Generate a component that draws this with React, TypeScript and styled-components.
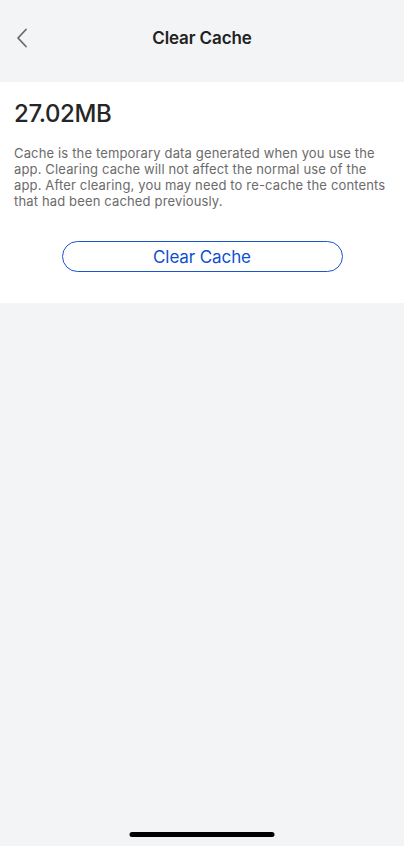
import styled, { createGlobalStyle } from "styled-components";

const GlobalStyle = createGlobalStyle`
  html, body {
    margin: 0;
    padding: 0;
    background: #f3f4f6;
  }
  body {
    font-family: Inter, "Liberation Sans", Arial, sans-serif;
    -webkit-font-smoothing: antialiased;
  }
`;

const Page = styled.div`
  position: relative;
  min-height: 846px;
  background: #f3f4f6;
  display: flex;
  flex-direction: column;
`;

const Header = styled.header`
  padding: 16px 0 22px;
`;

const NavBar = styled.div`
  position: relative;
  height: 44px;
  display: flex;
  align-items: center;
  justify-content: center;
`;

const BackButton = styled.button`
  position: absolute;
  left: 10px;
  top: 50%;
  transform: translateY(-50%);
  width: 24px;
  height: 24px;
  padding: 0;
  border: none;
  background: none;
  display: flex;
  align-items: center;
  justify-content: center;
`;

const Title = styled.h1`
  margin: 0;
  font-size: 17px;
  font-weight: 600;
  color: #222;
  letter-spacing: -0.1px;
`;

const Panel = styled.section`
  background: #fff;
  padding: 16px 14px 31px;
  display: flex;
  flex-direction: column;
`;

const Size = styled.div`
  font-size: 24px;
  line-height: 32px;
  font-weight: 500;
  color: #262626;
  letter-spacing: -0.4px;
`;

const Description = styled.p`
  margin: 15px 0 0;
  font-size: 13px;
  line-height: 16px;
  color: #6b6b6b;
  letter-spacing: 0.15px;
`;

const ClearButton = styled.button`
  align-self: center;
  margin-top: 32px;
  width: 281px;
  height: 31px;
  border: 1px solid #1a56d0;
  border-radius: 16px;
  background: #fff;
  color: #0e4fcf;
  font-family: Inter, "Liberation Sans", Arial, sans-serif;
  font-size: 17px;
  letter-spacing: -0.1px;
  padding: 0;
`;

const HomeIndicator = styled.div`
  position: absolute;
  left: 50%;
  bottom: 9px;
  transform: translateX(-50%);
  width: 145px;
  height: 5px;
  border-radius: 3px;
  background: #000;
`;

export default function App() {
  return (
    <>
      <GlobalStyle />
      <Page>
        <Header>
          <NavBar>
            <BackButton aria-label="Back">
              <svg width="12" height="20" viewBox="0 0 12 20" fill="none">
                <path
                  d="M10 1.5 L2 10 L10 18.5"
                  stroke="#6a6a6a"
                  strokeWidth="1.8"
                  strokeLinecap="round"
                  strokeLinejoin="round"
                />
              </svg>
            </BackButton>
            <Title>Clear Cache</Title>
          </NavBar>
        </Header>
        <Panel>
          <Size>27.02MB</Size>
          <Description>
            Cache is the temporary data generated when you use the app.
            Clearing cache will not affect the normal use of the app. After
            clearing, you may need to re-cache the contents that had been
            cached previously.
          </Description>
          <ClearButton>Clear Cache</ClearButton>
        </Panel>
        <HomeIndicator />
      </Page>
    </>
  );
}
